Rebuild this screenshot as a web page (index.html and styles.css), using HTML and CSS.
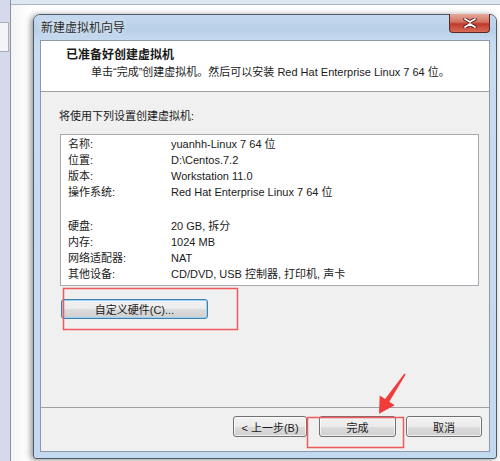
FILE: index.html
```html
<!DOCTYPE html>
<html lang="zh-CN">
<head>
  <meta charset="UTF-8" />
  <title>新建虚拟机向导</title>
  <link rel="stylesheet" href="styles.css">
</head>
<body>
  <div class="desk">
    <div class="sidebar">
      <div class="side-box"></div>
    </div>
    <div class="main">
      <div class="window">
        <div class="titlebar">
          <span class="title">新建虚拟机向导</span>
          <span class="close">
            <svg width="16" height="10" viewBox="0 0 16 10">
              <path d="M3 1 L8 4 L13 1 M3 9 L8 6 L13 9" fill="none" stroke="#4a1510" stroke-width="3.4" stroke-linecap="round"/>
              <path d="M3 1 L8 4 L13 1 M3 9 L8 6 L13 9" fill="none" stroke="#fff" stroke-width="1.8" stroke-linecap="round"/>
            </svg>
          </span>
        </div>
        <div class="client">
          <div class="header">
            <div class="head-title">已准备好创建虚拟机</div>
            <div class="head-sub">单击“完成”创建虚拟机。然后可以安装 Red Hat Enterprise Linux 7 64 位。</div>
          </div>
          <div class="content">
            <div class="lead">将使用下列设置创建虚拟机:</div>
            <div class="summary">
              <span>名称:</span><span>yuanhh-Linux 7 64 位</span>
              <span>位置:</span><span>D:\Centos.7.2</span>
              <span>版本:</span><span>Workstation 11.0</span>
              <span>操作系统:</span><span>Red Hat Enterprise Linux 7 64 位</span>
              <span></span><span></span>
              <span>硬盘:</span><span>20 GB, 拆分</span>
              <span>内存:</span><span>1024 MB</span>
              <span>网络适配器:</span><span>NAT</span>
              <span>其他设备:</span><span>CD/DVD, USB 控制器, 打印机, 声卡</span>
            </div>
            <button class="btn focus custom" type="button">自定义硬件(C)...</button>
          </div>
          <div class="footer">
            <button class="btn back" type="button">&lt; 上一步(B)</button>
            <button class="btn finish" type="button">完成</button>
            <button class="btn cancel" type="button">取消</button>
          </div>
        </div>
      </div>
    </div>
    <!-- red annotation marks drawn over the dialog -->
    <svg class="marks" width="500" height="461" viewBox="0 0 500 461">
      <rect x="63.5" y="288.5" width="174" height="41" fill="none" stroke="#f05a5a" stroke-width="1.5"/>
      <rect x="307.5" y="417.5" width="96" height="30" fill="none" stroke="#f05a5a" stroke-width="1.5"/>
      <polygon points="405.6,374.4 389.3,401.8 394.7,405.3 379,413.8 379.7,395.5 385.1,399 404.4,373.6" fill="#f23b3b"/>
    </svg>
  </div>
</body>
</html>
```

FILE: styles.css
```css
body {
  margin: 0;
  width: 500px;
  height: 461px;
  overflow: hidden;
  font-family: "Liberation Sans", "Noto Sans CJK SC", sans-serif;
  font-size: 11px;
  color: #1a1a1a;
}
.desk {
  position: relative;
  display: flex;
  height: 461px;
}
.sidebar {
  width: 10px;
  background: #d5d9ec;
  border-right: 1px solid #8d929e;
}
.side-box {
  margin-top: 22px;
  height: 28px;
  width: 8px;
  background: #f4f4f8;
  border: 1px solid #a8adba;
  border-left: none;
}
.main {
  flex: 1;
  padding: 14px 0 0 22px;
  background: linear-gradient(#dfe7f1 0 4px, #aab4c2 4px 5px, transparent 5px),
              linear-gradient(to right, #f3f3f3, #ffffff 18px);
}
.window {
  box-sizing: border-box;
  width: 464px;
  height: 445px;
  border: 1px solid #4f5a68;
  border-radius: 7px 7px 3px 3px;
  padding: 0 6px 6px 6px;
  background: linear-gradient(#bcd3ec, #c9dcf1 40px, #c3d9ef);
  box-shadow: -2px 1px 6px rgba(0, 0, 0, 0.45);
  display: flex;
  flex-direction: column;
}
.titlebar {
  height: 25px;
  display: flex;
  justify-content: space-between;
  align-items: flex-start;
  background: linear-gradient(#c5d9ee, #b7cfe8 60%, #c6daef);
  margin: 0 -6px;
  padding: 0 6px 0 7px;
  border-radius: 6px 6px 0 0;
}
.title {
  line-height: 26px;
  font-size: 12px;
  color: #2a2a2a;
  text-shadow: 0 0 6px #fff;
}
.close {
  box-sizing: border-box;
  margin-top: -1px;
  width: 41px;
  height: 19px;
  display: flex;
  align-items: center;
  justify-content: center;
  border: 1px solid #5b2720;
  border-top: none;
  border-radius: 0 0 4px 4px;
  background: linear-gradient(#e6a99b, #d3715f 45%, #c0392b 55%, #d66c57);
}
.client {
  flex: 1;
  display: flex;
  flex-direction: column;
  border: 1px solid #8c99a9;
  background: #f0f0f0;
}
.header {
  height: 51px;
  box-sizing: border-box;
  padding: 6px 0 0 25px;
  background: #fff;
  border-bottom: 1px solid #a0a0a0;
  line-height: 16px;
}
.head-title {
  font-weight: bold;
  font-size: 12px;
  margin-bottom: 1px;
}
.head-sub {
  padding-left: 25px;
}
.content {
  flex: 1;
  padding: 16px 10px 0 18px;
}
.lead {
  line-height: 16px;
}
.summary {
  margin: 10px 0 0 1px;
  height: 152px;
  box-sizing: border-box;
  padding: 1px 0 0 7px;
  background: #fff;
  border: 1px solid #a5a9b0;
  display: grid;
  grid-template-columns: 103px 1fr;
  grid-template-rows: 16px 16px 16px 16px 18px;
  grid-auto-rows: 16px;
  line-height: 16px;
}
.btn {
  font-family: inherit;
  font-size: 11px;
  color: #1a1a1a;
  height: 21px;
  padding: 0;
  border: 1px solid #707070;
  border-radius: 3px;
  background: linear-gradient(#f2f2f2, #ebebeb 50%, #dddddd 50%, #cfcfcf);
  box-shadow: inset 0 0 0 1px rgba(255, 255, 255, 0.7);
}
.custom {
  display: block;
  margin: 13px 0 0 2px;
  width: 147px;
  height: 20px;
}
.focus {
  border-color: #3c7fb1;
  box-shadow: inset 0 0 0 1px #9fd1f2;
}
.footer {
  height: 35px;
  border-top: 1px solid #a0a0a0;
  display: flex;
  justify-content: flex-end;
  align-items: flex-start;
  padding: 8px 7px 0 0;
}
.back {
  width: 74px;
}
.finish {
  width: 77px;
  margin-left: 12px;
}
.cancel {
  width: 76px;
  margin-left: 10px;
}
.marks {
  position: absolute;
  left: 0;
  top: 0;
  pointer-events: none;
}
```
